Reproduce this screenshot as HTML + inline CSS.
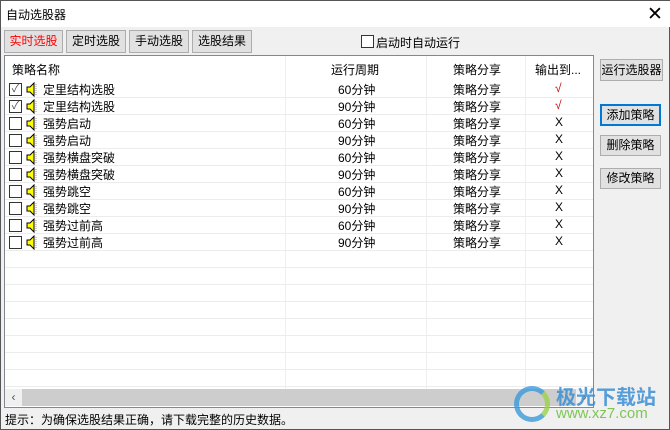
<!DOCTYPE html>
<html><head><meta charset="utf-8"><style>
*{margin:0;padding:0;box-sizing:border-box}
body{width:670px;height:430px;background:#f0f0f0;font-family:"Liberation Sans","Noto Sans CJK SC",sans-serif;font-size:12px;color:#000;position:relative;overflow:hidden;border:1px solid #555}
.a{position:absolute}
.title{left:0;top:0;width:670px;height:26px;background:#fff}
.tab{top:29px;height:23px;background:#e1e1e1;border:1px solid #adadad;text-align:center;line-height:21px}
.btn{background:#e1e1e1;border:1px solid #adadad;text-align:center;line-height:19px}
.list{left:3px;top:54px;width:590px;height:353px;background:#fff;border:1px solid #828790}
.cb{width:13px;height:13px;border:1px solid #333;background:#fff}
.row{left:0;width:588px;height:17px;border-bottom:1px solid #ececec}
.vl{top:0;width:1px;background:#efefef}
</style></head><body>
<div class="a title"></div>
<div class="a" style="left:5px;top:5px">自动选股器</div>
<div class="a" style="left:646px;top:2px;font-size:19px;font-weight:300">✕</div>
<div class="a tab" style="left:3px;width:59px;color:#f00">实时选股</div>
<div class="a tab" style="left:65px;width:60px">定时选股</div>
<div class="a tab" style="left:128px;width:60px">手动选股</div>
<div class="a tab" style="left:191px;width:60px">选股结果</div>
<div class="a cb" style="left:360px;top:34px"></div>
<div class="a" style="left:375px;top:33px">启动时自动运行</div>
<div class="a list">
<div class="a vl" style="left:280px;height:334px"></div>
<div class="a vl" style="left:421px;height:334px"></div>
<div class="a vl" style="left:520px;height:334px"></div>
<div class="a" style="left:7px;top:5px">策略名称</div>
<div class="a" style="left:326px;top:5px">运行周期</div>
<div class="a" style="left:448px;top:5px">策略分享</div>
<div class="a" style="left:530px;top:5px">输出到...</div>
<div id="rows"></div>
<div class="a" style="left:0;top:333px;width:588px;height:17px;background:#cdcdcd"></div>
<div class="a" style="left:0;top:333px;width:17px;height:17px;background:#f0f0f0;text-align:center;line-height:16px;color:#555">‹</div>
<div class="a" style="left:571px;top:333px;width:17px;height:17px;background:#f0f0f0;text-align:center;line-height:16px;color:#555">›</div>
</div>
<div class="a btn" style="left:599px;top:58px;width:63px;height:22px;line-height:20px">运行选股器</div>
<div class="a btn" style="left:599px;top:103px;width:61px;height:22px;border:2px solid #0078d7;line-height:18px">添加策略</div>
<div class="a btn" style="left:599px;top:134px;width:61px;height:21px">删除策略</div>
<div class="a btn" style="left:599px;top:167px;width:61px;height:21px">修改策略</div>
<div class="a" style="left:4px;top:410px">提示：为确保选股结果正确，请下载完整的历史数据。</div>
<div class="a" style="left:513px;top:385px;width:36px;height:36px;border-radius:50%;border:5px solid #3a9ad9;border-right-color:#9bd14a;opacity:.8"></div>
<div class="a" style="left:555px;top:380px;font-size:20px;font-weight:bold;color:#3a8fd4;opacity:.85">极光下载站</div>
<div class="a" style="left:555px;top:404px;font-size:15px;color:#6abf3a;opacity:.85">www.xz7.com</div>
<script>
var d=[["定里结构选股","60",1],["定里结构选股","90",1],["强势启动","60"],["强势启动","90"],["强势横盘突破","60"],["强势横盘突破","90"],["强势跳空","60"],["强势跳空","90"],["强势过前高","60"],["强势过前高","90"]];
var h="";
for(var i=0;i<19;i++){var t=25+i*17;h+='<div class="a row" style="top:'+t+'px"></div>';
if(i<10){var r=d[i];
h+='<div class="a cb" style="left:4px;top:'+(t+2)+'px;text-align:center;line-height:10px;color:#555;font-size:11px">'+(r[2]?'✓':'')+'</div>';
h+='<svg class="a" style="left:21px;top:'+(t+1)+'px" width="14" height="15"><path d="M1 5h3l4-4v13l-4-4H1z" fill="#ff0" stroke="#000"/><path d="M10 2v11" stroke="#999" stroke-dasharray="1 1"/></svg>';
h+='<div class="a" style="left:38px;top:'+t+'px">'+r[0]+'</div>';
h+='<div class="a" style="left:333px;top:'+t+'px">'+r[1]+'分钟</div>';
h+='<div class="a" style="left:448px;top:'+t+'px">策略分享</div>';
h+='<div class="a" style="left:550px;top:'+t+'px;color:'+(r[2]?'#c00':'#000')+'">'+(r[2]?'√':'X')+'</div>';}}
document.getElementById("rows").innerHTML=h;
</script>
</body></html>
